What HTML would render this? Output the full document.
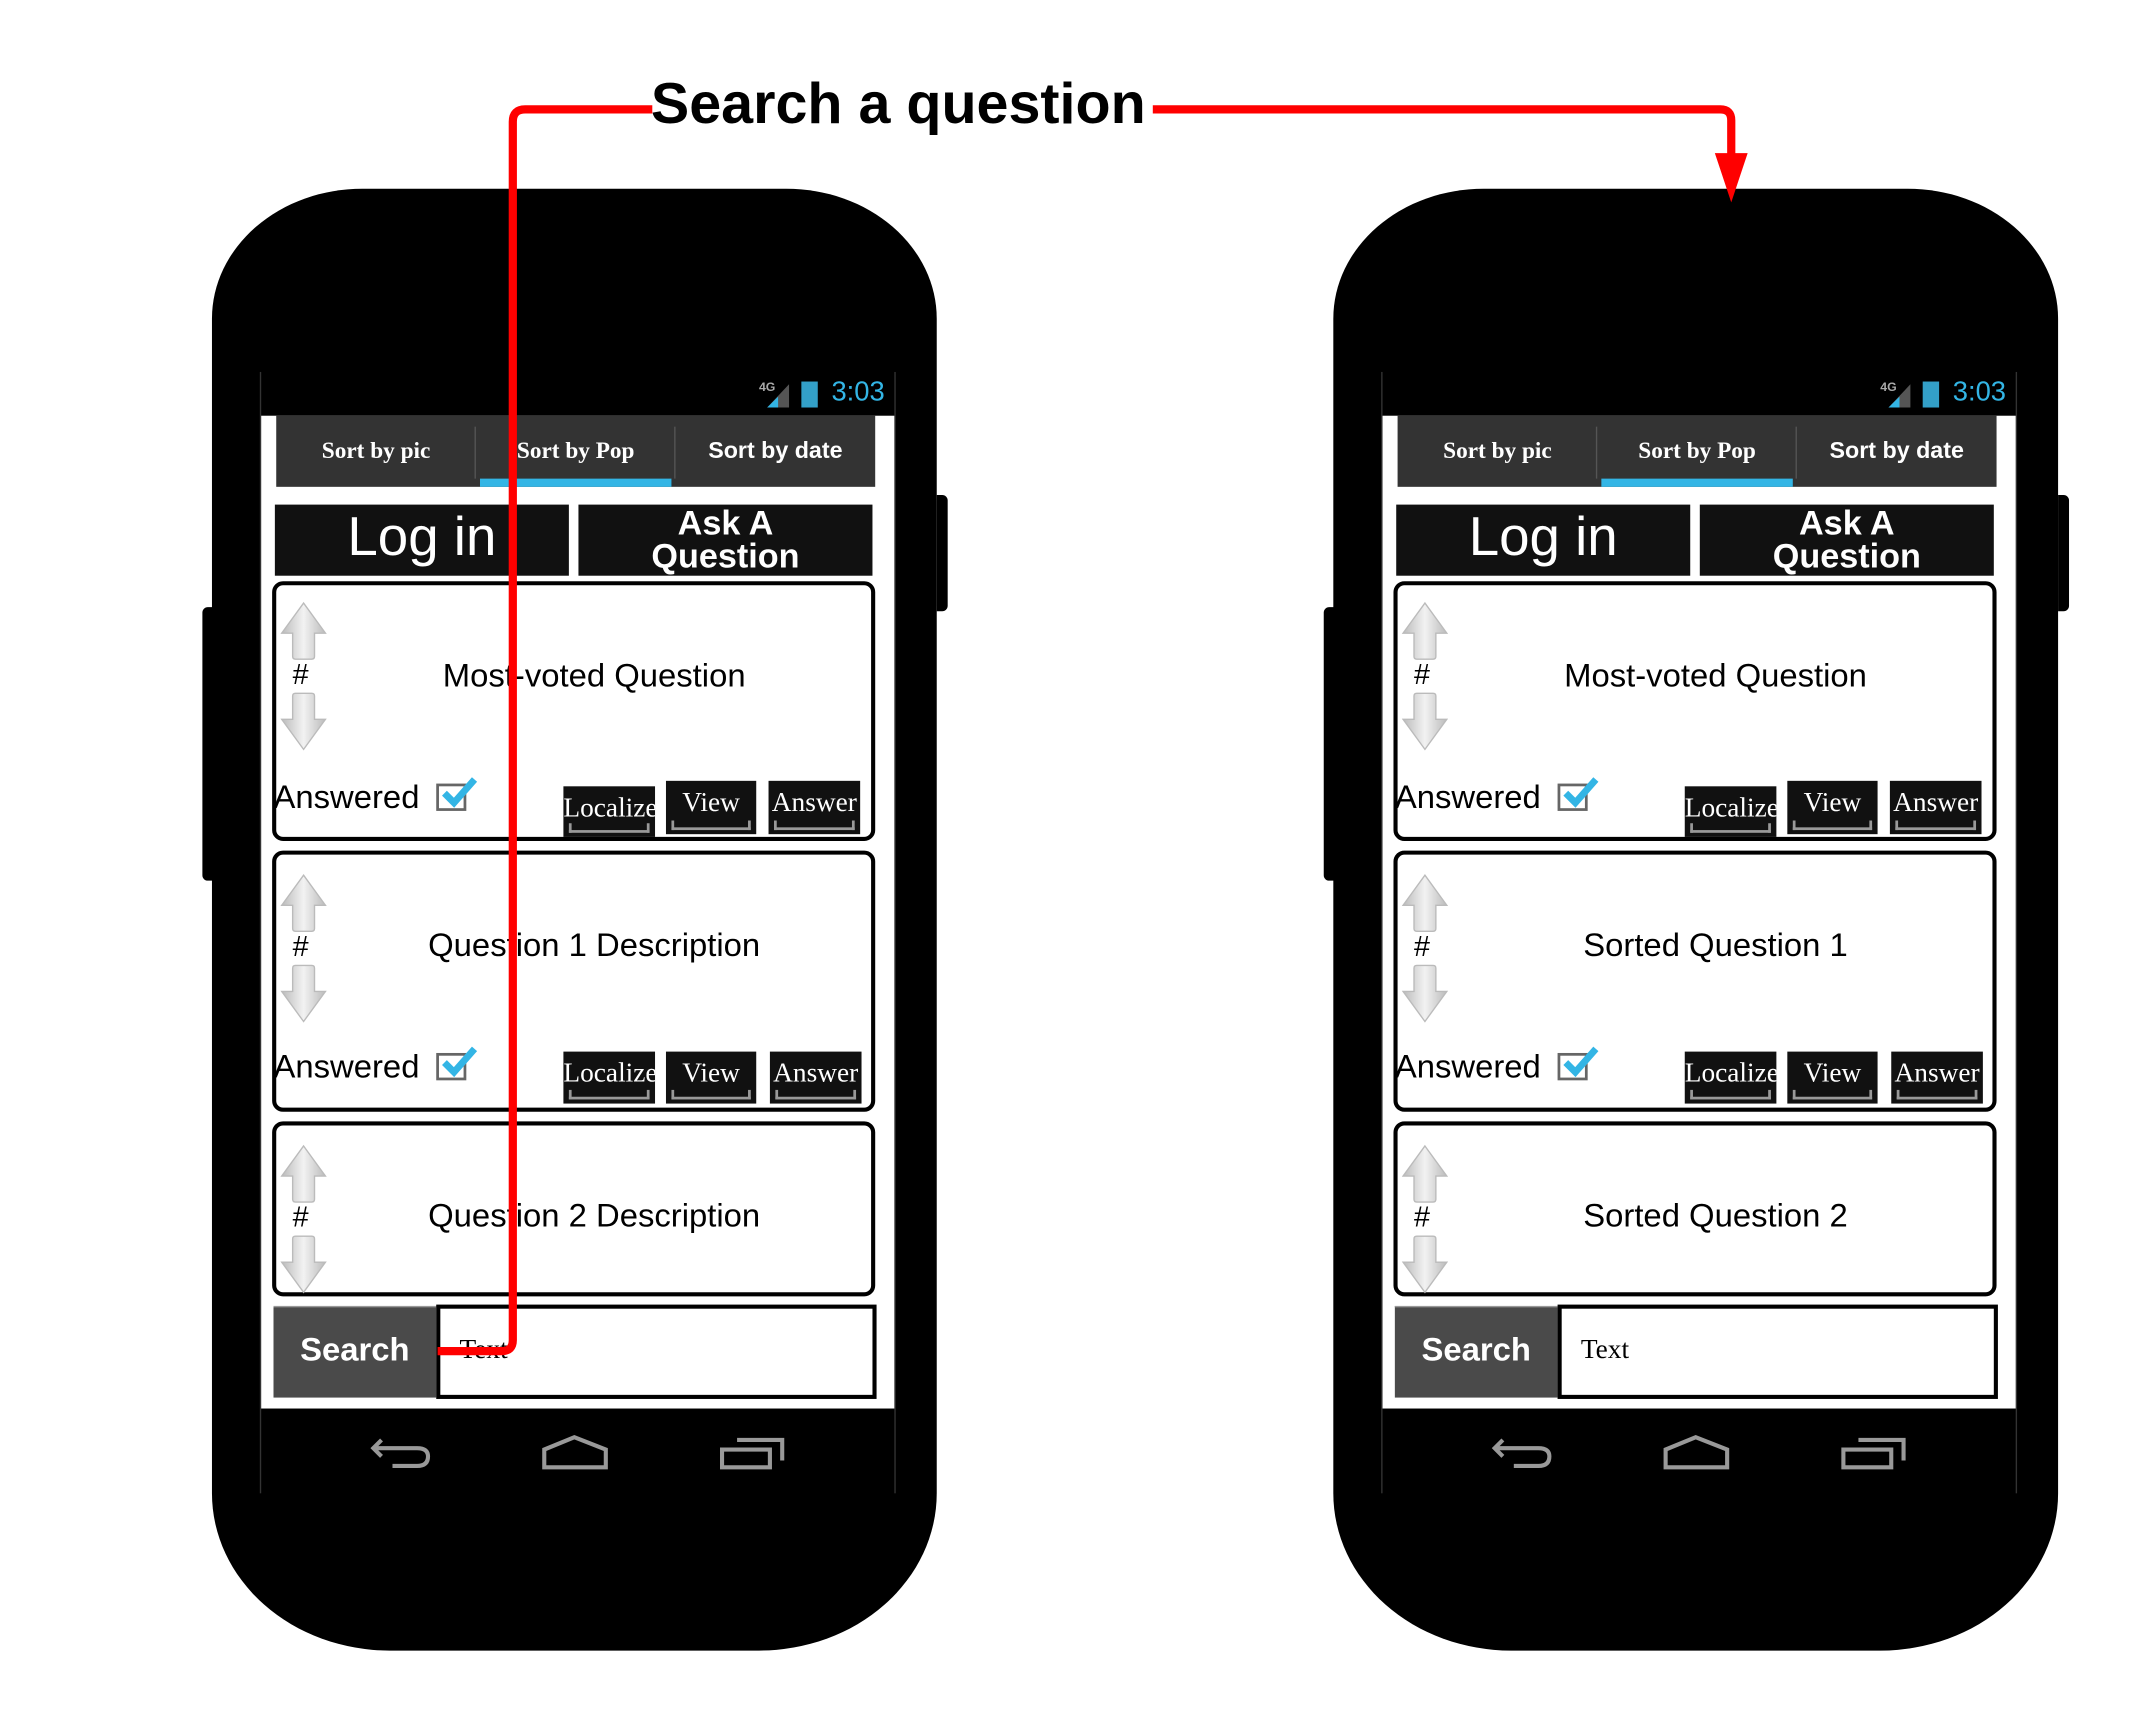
<!DOCTYPE html>
<html><head><meta charset="utf-8"><style>
*{margin:0;padding:0;box-sizing:border-box}
body{width:2136px;height:1719px;background:#fff;overflow:hidden;font-family:"Liberation Sans",sans-serif}
#w{position:absolute;left:0;top:0;width:1562px;height:1257px;transform:scale(1.3675);transform-origin:0 0}
.a{position:absolute}
.phone{position:absolute;top:138px;width:530px;height:1069px}
.body{position:absolute;left:0;top:0;width:530px;height:1069px;background:#000;border-radius:110px 110px 130px 130px/95px 95px 115px 115px}
.btnr{left:530px;top:224px;width:8px;height:85px;background:#000;border-radius:0 4px 4px 0}
.btnl{left:-7px;top:306px;width:8px;height:200px;background:#000;border-radius:4px 0 0 4px}
.edge{left:35px;top:134px;width:465px;height:820px;border-left:1px solid #333;border-right:1px solid #333}
.white{left:36px;top:166px;width:463px;height:726px;background:#fff}
.tabs{left:47px;top:166px;width:438px;height:52px;background:#333;color:#fff}
.tab{position:absolute;top:0;height:52px;line-height:52px;text-align:center;font-size:17px;font-weight:bold}
.div{position:absolute;top:8px;width:1px;height:38px;background:#555}
.dark{background:#111;color:#fff;text-align:center}
.card{position:absolute;left:44px;width:441px;border:3px solid #000;border-radius:8px;background:#fff}
.ttl{position:absolute;left:30px;right:0;text-align:center;font-size:24px;line-height:28px}
.hash{position:absolute;left:12px;font-size:21px}
.ans{position:absolute;left:-2px;top:142px;font-size:24px}
.cb{position:absolute;left:117px;top:145px;width:22px;height:20px;border:2px solid #666}
.b{position:absolute;background:#111;color:#fff;font-family:"Liberation Serif",serif;font-size:20px;text-align:center;line-height:32px;overflow:hidden;white-space:nowrap}
.b:after{content:"";position:absolute;left:4px;right:4px;bottom:3px;height:5px;border:2px solid #999;border-top:none}
</style></head><body><div id="w">

<div class="a" style="left:476px;top:51px;font-size:42px;font-weight:bold;line-height:50px">Search a question</div>

<div class="phone" style="left:155px">
 <div class="a btnr"></div><div class="a btnl"></div>
 <div class="body"></div>
 <div class="a edge"></div>
 <div class="a white"></div>
 <div class="a" style="left:400px;top:140px;font-size:9px;color:#aaa;font-weight:bold">4G</div>
 <svg class="a" style="left:404px;top:141px" width="20" height="20"><polygon points="2,19 18,19 18,2" fill="#555"/><polygon points="2,19 10,19 10,11" fill="#33b5e5"/></svg>
 <div class="a" style="left:431px;top:141px;width:12px;height:19px;background:#33a0c8"></div>
 <div class="a" style="left:453px;top:138px;font-size:20px;color:#33b5e5">3:03</div>
 <div class="a tabs">
  <div class="tab" style="left:0;width:146px;font-family:'Liberation Serif',serif">Sort by pic</div>
  <div class="div" style="left:145px"></div>
  <div class="tab" style="left:146px;width:146px;font-family:'Liberation Serif',serif">Sort by Pop</div>
  <div class="div" style="left:291px"></div>
  <div class="tab" style="left:292px;width:146px">Sort by date</div>
  <div class="a" style="left:149px;top:46px;width:140px;height:6px;background:#33b5e5"></div>
 </div>
 <div class="a dark" style="left:46px;top:231px;width:215px;height:52px;font-size:40px;line-height:48px;font-weight:300">Log in</div>
 <div class="a dark" style="left:268px;top:231px;width:215px;height:52px;font-size:25px;line-height:24px;font-weight:bold;padding-top:2px">Ask A<br>Question</div>

 <div class="card" style="top:287px;height:190px">
  <svg class="a" style="left:3px;top:12px" width="34" height="110"><defs><linearGradient id="g" x1="0" x2="1"><stop offset="0" stop-color="#bbb"/><stop offset=".5" stop-color="#f2f2f2"/><stop offset="1" stop-color="#bbb"/></linearGradient></defs><path d="M17 1 L33 23 L25 23 L25 40 Q25 42 23 42 L11 42 Q9 42 9 40 L9 23 L1 23 Z" fill="url(#g)" stroke="#bbb"/><path d="M17 108 L33 86 L25 86 L25 69 Q25 67 23 67 L11 67 Q9 67 9 69 L9 86 L1 86 Z" fill="url(#g)" stroke="#bbb"/></svg>
  <div class="hash" style="top:54px">#</div>
  <div class="ttl" style="top:53px">Most-voted Question</div>
  <div class="ans">Answered</div>
  <div class="cb"></div><svg class="a" style="left:119px;top:138px" width="30" height="26"><path d="M4 14 L11 21 L26 4" stroke="#33b5e5" stroke-width="5" fill="none"/></svg>
  <div class="b" style="left:210px;top:147px;width:67px;height:37px">Localize</div>
  <div class="b" style="left:285px;top:143px;width:66px;height:39px">View</div>
  <div class="b" style="left:360px;top:143px;width:67px;height:39px">Answer</div>
 </div>
 <div class="card" style="top:484px;height:191px">
  <svg class="a" style="left:3px;top:14px" width="34" height="110"><path d="M17 1 L33 23 L25 23 L25 40 Q25 42 23 42 L11 42 Q9 42 9 40 L9 23 L1 23 Z" fill="url(#g)" stroke="#bbb"/><path d="M17 108 L33 86 L25 86 L25 69 Q25 67 23 67 L11 67 Q9 67 9 69 L9 86 L1 86 Z" fill="url(#g)" stroke="#bbb"/></svg>
  <div class="hash" style="top:56px">#</div>
  <div class="ttl" style="top:53px">Question 1 Description</div>
  <div class="ans">Answered</div>
  <div class="cb"></div><svg class="a" style="left:119px;top:138px" width="30" height="26"><path d="M4 14 L11 21 L26 4" stroke="#33b5e5" stroke-width="5" fill="none"/></svg>
  <div class="b" style="left:210px;top:144px;width:67px;height:38px">Localize</div>
  <div class="b" style="left:285px;top:144px;width:66px;height:38px">View</div>
  <div class="b" style="left:361px;top:144px;width:67px;height:38px">Answer</div>
 </div>
 <div class="card" style="top:682px;height:128px">
  <svg class="a" style="left:3px;top:14px" width="34" height="110"><path d="M17 1 L33 23 L25 23 L25 40 Q25 42 23 42 L11 42 Q9 42 9 40 L9 23 L1 23 Z" fill="url(#g)" stroke="#bbb"/><path d="M17 108 L33 86 L25 86 L25 69 Q25 67 23 67 L11 67 Q9 67 9 69 L9 86 L1 86 Z" fill="url(#g)" stroke="#bbb"/></svg>
  <div class="hash" style="top:56px">#</div>
  <div class="ttl" style="top:53px">Question 2 Description</div>
 </div>
 <div class="a" style="left:45px;top:817px;width:119px;height:67px;background:#4a4a4a;color:#fff;font-weight:bold;font-size:24px;line-height:63px;text-align:center;border-top:1px solid #999">Search</div>
 <div class="a" style="left:164px;top:816px;width:322px;height:69px;border:3px solid #000;font-family:'Liberation Serif',serif;font-size:20px;line-height:60px;padding-left:14px">Text</div>
 <svg class="a" style="left:110px;top:908px" width="330" height="36" fill="none" stroke="#999" stroke-width="3"><path d="M14 7 L8 13 L14 19 M8 13 L40 13 Q48 13 48 19 Q48 26 40 26 L22 26"/><path d="M133 27 L133 14 L155 5 L178 14 L178 27 Z"/><path d="M263 14 L298 14 L298 27 L263 27 Z M274 7 L307 7 L307 22"/></svg>
</div>

<div class="phone" style="left:975px">
 <div class="a btnr"></div><div class="a btnl"></div>
 <div class="body"></div>
 <div class="a edge"></div>
 <div class="a white"></div>
 <div class="a" style="left:400px;top:140px;font-size:9px;color:#aaa;font-weight:bold">4G</div>
 <svg class="a" style="left:404px;top:141px" width="20" height="20"><polygon points="2,19 18,19 18,2" fill="#555"/><polygon points="2,19 10,19 10,11" fill="#33b5e5"/></svg>
 <div class="a" style="left:431px;top:141px;width:12px;height:19px;background:#33a0c8"></div>
 <div class="a" style="left:453px;top:138px;font-size:20px;color:#33b5e5">3:03</div>
 <div class="a tabs">
  <div class="tab" style="left:0;width:146px;font-family:'Liberation Serif',serif">Sort by pic</div>
  <div class="div" style="left:145px"></div>
  <div class="tab" style="left:146px;width:146px;font-family:'Liberation Serif',serif">Sort by Pop</div>
  <div class="div" style="left:291px"></div>
  <div class="tab" style="left:292px;width:146px">Sort by date</div>
  <div class="a" style="left:149px;top:46px;width:140px;height:6px;background:#33b5e5"></div>
 </div>
 <div class="a dark" style="left:46px;top:231px;width:215px;height:52px;font-size:40px;line-height:48px;font-weight:300">Log in</div>
 <div class="a dark" style="left:268px;top:231px;width:215px;height:52px;font-size:25px;line-height:24px;font-weight:bold;padding-top:2px">Ask A<br>Question</div>

 <div class="card" style="top:287px;height:190px">
  <svg class="a" style="left:3px;top:12px" width="34" height="110"><path d="M17 1 L33 23 L25 23 L25 40 Q25 42 23 42 L11 42 Q9 42 9 40 L9 23 L1 23 Z" fill="url(#g)" stroke="#bbb"/><path d="M17 108 L33 86 L25 86 L25 69 Q25 67 23 67 L11 67 Q9 67 9 69 L9 86 L1 86 Z" fill="url(#g)" stroke="#bbb"/></svg>
  <div class="hash" style="top:54px">#</div>
  <div class="ttl" style="top:53px">Most-voted Question</div>
  <div class="ans">Answered</div>
  <div class="cb"></div><svg class="a" style="left:119px;top:138px" width="30" height="26"><path d="M4 14 L11 21 L26 4" stroke="#33b5e5" stroke-width="5" fill="none"/></svg>
  <div class="b" style="left:210px;top:147px;width:67px;height:37px">Localize</div>
  <div class="b" style="left:285px;top:143px;width:66px;height:39px">View</div>
  <div class="b" style="left:360px;top:143px;width:67px;height:39px">Answer</div>
 </div>
 <div class="card" style="top:484px;height:191px">
  <svg class="a" style="left:3px;top:14px" width="34" height="110"><path d="M17 1 L33 23 L25 23 L25 40 Q25 42 23 42 L11 42 Q9 42 9 40 L9 23 L1 23 Z" fill="url(#g)" stroke="#bbb"/><path d="M17 108 L33 86 L25 86 L25 69 Q25 67 23 67 L11 67 Q9 67 9 69 L9 86 L1 86 Z" fill="url(#g)" stroke="#bbb"/></svg>
  <div class="hash" style="top:56px">#</div>
  <div class="ttl" style="top:53px">Sorted Question 1</div>
  <div class="ans">Answered</div>
  <div class="cb"></div><svg class="a" style="left:119px;top:138px" width="30" height="26"><path d="M4 14 L11 21 L26 4" stroke="#33b5e5" stroke-width="5" fill="none"/></svg>
  <div class="b" style="left:210px;top:144px;width:67px;height:38px">Localize</div>
  <div class="b" style="left:285px;top:144px;width:66px;height:38px">View</div>
  <div class="b" style="left:361px;top:144px;width:67px;height:38px">Answer</div>
 </div>
 <div class="card" style="top:682px;height:128px">
  <svg class="a" style="left:3px;top:14px" width="34" height="110"><path d="M17 1 L33 23 L25 23 L25 40 Q25 42 23 42 L11 42 Q9 42 9 40 L9 23 L1 23 Z" fill="url(#g)" stroke="#bbb"/><path d="M17 108 L33 86 L25 86 L25 69 Q25 67 23 67 L11 67 Q9 67 9 69 L9 86 L1 86 Z" fill="url(#g)" stroke="#bbb"/></svg>
  <div class="hash" style="top:56px">#</div>
  <div class="ttl" style="top:53px">Sorted Question 2</div>
 </div>
 <div class="a" style="left:45px;top:817px;width:119px;height:67px;background:#4a4a4a;color:#fff;font-weight:bold;font-size:24px;line-height:63px;text-align:center;border-top:1px solid #999">Search</div>
 <div class="a" style="left:164px;top:816px;width:322px;height:69px;border:3px solid #000;font-family:'Liberation Serif',serif;font-size:20px;line-height:60px;padding-left:14px">Text</div>
 <svg class="a" style="left:110px;top:908px" width="330" height="36" fill="none" stroke="#999" stroke-width="3"><path d="M14 7 L8 13 L14 19 M8 13 L40 13 Q48 13 48 19 Q48 26 40 26 L22 26"/><path d="M133 27 L133 14 L155 5 L178 14 L178 27 Z"/><path d="M263 14 L298 14 L298 27 L263 27 Z M274 7 L307 7 L307 22"/></svg>
</div>

<svg class="a" style="left:0;top:0" width="1562" height="1257" fill="none" stroke="#f00" stroke-width="6">
 <path d="M477 80 L384 80 Q375 80 375 89 L375 980 Q375 988 367 988 L320 988"/>
 <path d="M843 80 L1258 80 Q1266 80 1266 88 L1266 115"/>
 <polygon points="1254,112 1278,112 1266,148" fill="#f00" stroke="none"/>
</svg>
</div></body></html>
